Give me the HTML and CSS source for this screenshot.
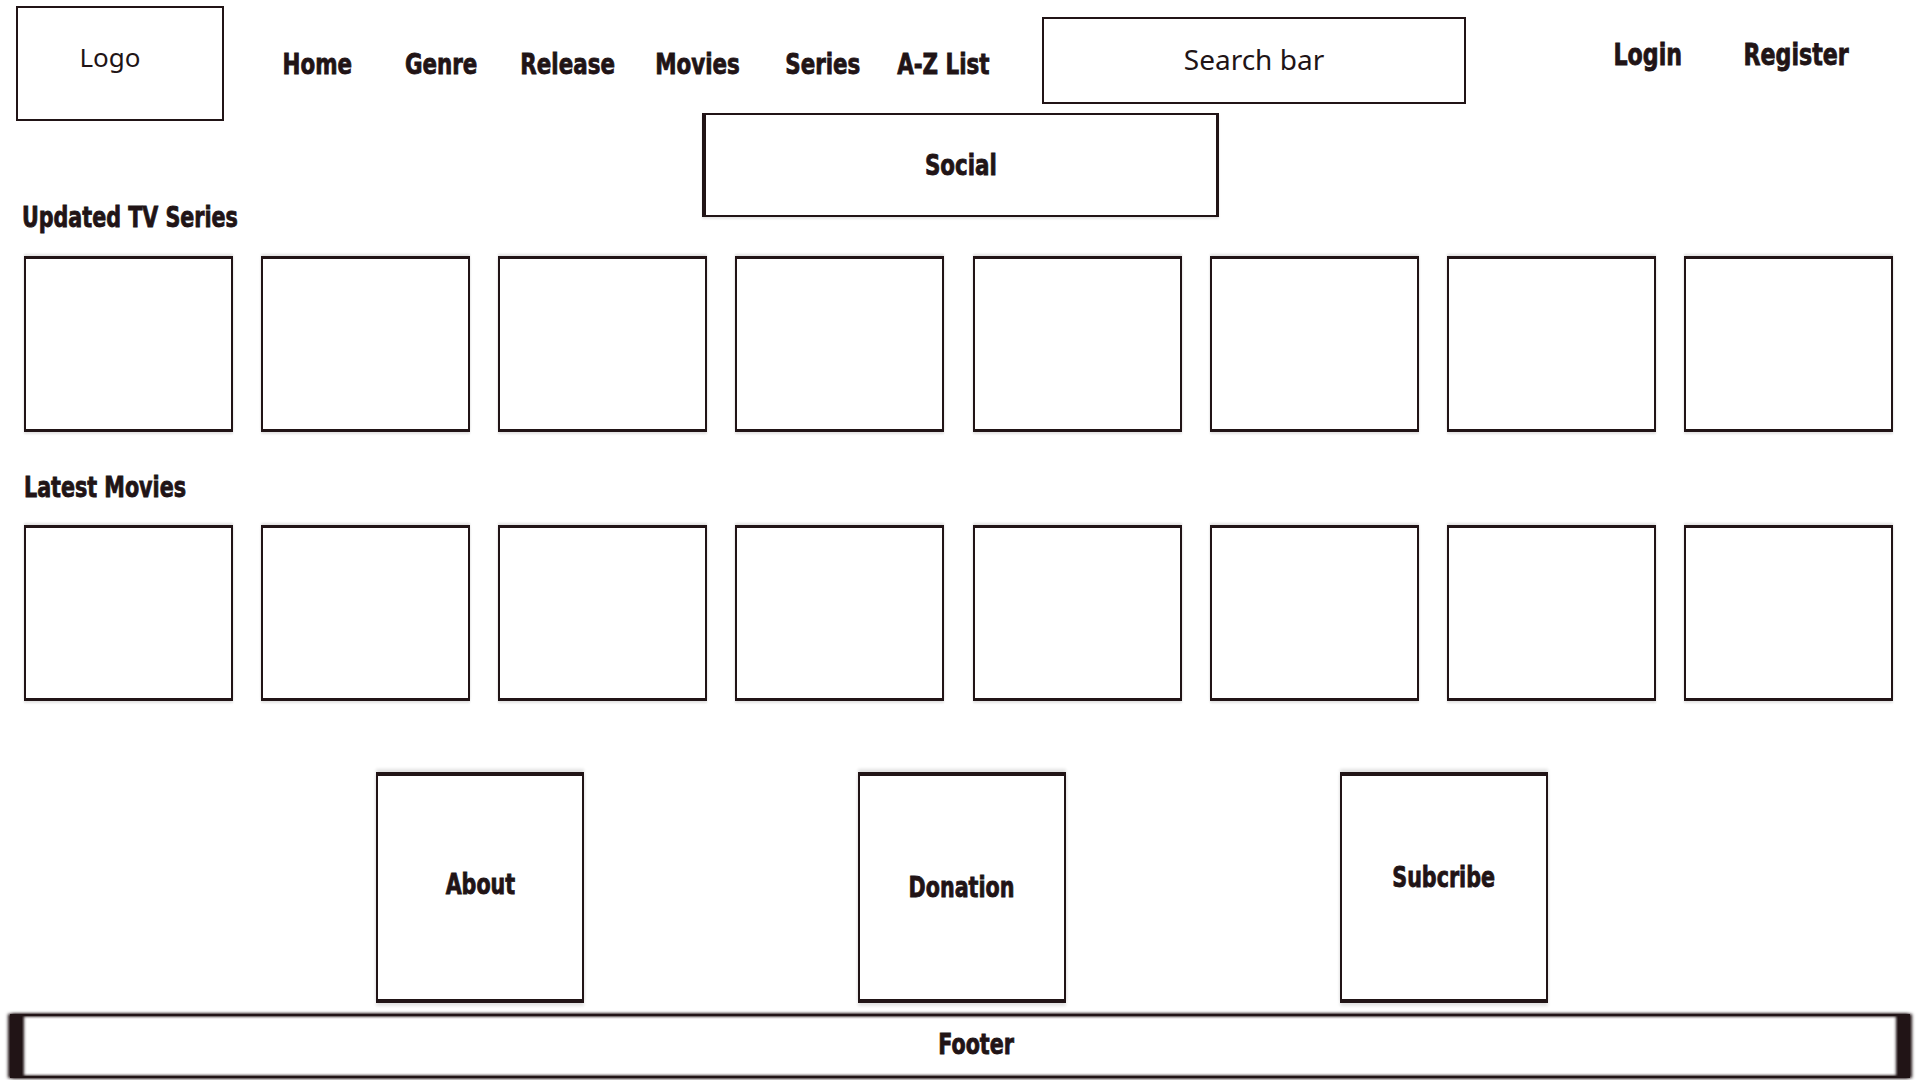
FILE: index.html
```html
<!DOCTYPE html>
<html lang="en">
<head>
    <meta charset="UTF-8">
    <meta name="viewport" content="width=device-width, initial-scale=1.0">
    <title>Movie Site Wireframe</title>
    <link rel="stylesheet" href="styles.css">
</head>
<body>
    <div class="header">
        <div class="logo">Logo</div>
        <div class="nav">
            <a class="nav-item"><span class="ink">Home</span></a>
            <a class="nav-item"><span class="ink">Genre</span></a>
            <a class="nav-item wide"><span class="ink">Release</span></a>
            <a class="nav-item wide"><span class="ink">Movies</span></a>
            <a class="nav-item narrow"><span class="ink">Series</span></a>
            <a class="nav-item narrow"><span class="ink">A-Z List</span></a>
        </div>
        <div class="search">Search bar</div>
        <div class="account">
            <a class="account-item"><span class="ink">Login</span></a>
            <a class="account-item"><span class="ink">Register</span></a>
        </div>
    </div>

    <div class="subbar">
        <h2 class="section-title first"><span class="ink left">Updated TV Series</span></h2>
        <div class="social"><span class="ink">Social</span></div>
    </div>

    <div class="cards series-row">
        <div class="card"></div>
        <div class="card"></div>
        <div class="card"></div>
        <div class="card"></div>
        <div class="card"></div>
        <div class="card"></div>
        <div class="card"></div>
        <div class="card"></div>
    </div>

    <h2 class="section-title"><span class="ink left">Latest Movies</span></h2>

    <div class="cards movies-row">
        <div class="card"></div>
        <div class="card"></div>
        <div class="card"></div>
        <div class="card"></div>
        <div class="card"></div>
        <div class="card"></div>
        <div class="card"></div>
        <div class="card"></div>
    </div>

    <div class="info">
        <div class="info-box"><span class="ink">About</span></div>
        <div class="info-box low"><span class="ink">Donation</span></div>
        <div class="info-box high"><span class="ink">Subcribe</span></div>
    </div>

    <div class="footer"><span class="ink">Footer</span></div>
</body>
</html>
```

FILE: styles.css
```css
body {
    margin: 0;
    width: 1920px;
    height: 1080px;
    overflow: hidden;
    background: #fff;
    color: #211416;
    font-family: "Noto Sans", sans-serif;
}

/* condensed heavy lettering used for all the wireframe labels */
.ink {
    display: inline-block;
    font-family: "DejaVu Sans Condensed", "DejaVu Sans", sans-serif;
    font-stretch: condensed;
    font-weight: 700;
    white-space: nowrap;
    -webkit-text-stroke: 0.8px #211416;
    transform: scaleX(0.82);
    transform-origin: center;
}

.ink.left {
    transform-origin: left center;
}

.header {
    display: flex;
    align-items: flex-start;
    height: 113px;
}

.logo {
    box-sizing: border-box;
    width: 208px;
    height: 115px;
    margin: 6px 0 0 16px;
    border: 2px solid #211416;
    display: flex;
    align-items: center;
    justify-content: center;
    padding-right: 20px;
    padding-bottom: 13px;
    font-size: 26px;
}

.nav {
    display: flex;
    margin: 43px 0 0 31px;
}

.nav-item {
    width: 124px;
    text-align: center;
    font-size: 29px;
    line-height: 40px;
}

.nav-item.wide {
    width: 130px;
}

.nav-item.narrow {
    width: 120px;
}

.search {
    box-sizing: border-box;
    width: 424px;
    height: 87px;
    margin: 17px 0 0 39px;
    border: 2px solid #211416;
    display: flex;
    align-items: center;
    justify-content: center;
    padding-bottom: 3px;
    font-size: 28px;
}

.account {
    display: flex;
    margin: 34px 0 0 108px;
}

.account-item {
    width: 148px;
    text-align: center;
    font-size: 30px;
    line-height: 40px;
}

.subbar {
    display: grid;
    grid-template-columns: 1fr 517px 1fr;
    height: 123px;
}

.social {
    box-sizing: border-box;
    height: 104px;
    border: 2px solid #211416;
    border-left-width: 4px;
    border-right-width: 3px;
    display: flex;
    align-items: center;
    justify-content: center;
    font-size: 29px;
    box-shadow: 0 2px 2px #e6e6e6;
}

.section-title {
    margin: 36px 0 0;
    padding-left: 24px;
    font-size: 28px;
    font-weight: normal;
    line-height: 36px;
}

.section-title.first {
    grid-column: 1;
    align-self: end;
    margin: 0;
    padding-left: 22px;
}

.cards {
    display: flex;
    justify-content: space-between;
    padding: 0 27px 0 24px;
}

.series-row {
    margin-top: 20px;
}

.movies-row {
    margin-top: 19px;
}

.card {
    box-sizing: border-box;
    width: 209px;
    height: 176px;
    border: 2px solid #211416;
    border-top-width: 3px;
    border-bottom-width: 3px;
    box-shadow: 0 -2px 2px #e4e4e4, 0 2px 2px #e4e4e4;
}

.info {
    display: flex;
    justify-content: center;
    gap: 274px;
    margin-top: 71px;
    padding-left: 4px;
}

.info-box {
    box-sizing: border-box;
    width: 208px;
    height: 231px;
    border: 2px solid #211416;
    border-top-width: 4px;
    border-bottom-width: 4px;
    display: flex;
    align-items: center;
    justify-content: center;
    padding-bottom: 6px;
    font-size: 28px;
    box-shadow: 0 -3px 3px #e2e2e2, 0 3px 3px #e2e2e2;
}

.info-box.low {
    padding-bottom: 0;
}

.info-box.high {
    padding-bottom: 20px;
}

.footer {
    box-sizing: border-box;
    width: 1900px;
    height: 64px;
    margin: 11px 0 0 10px;
    border: 2px solid #211416;
    border-left-width: 12px;
    border-right-width: 12px;
    display: flex;
    align-items: center;
    justify-content: center;
    padding-left: 32px;
    padding-bottom: 4px;
    font-size: 28px;
    box-shadow: -2px 0 3px #211416, 2px 0 3px #211416, inset 2px 0 3px #211416, inset -2px 0 3px #211416;
}
```
